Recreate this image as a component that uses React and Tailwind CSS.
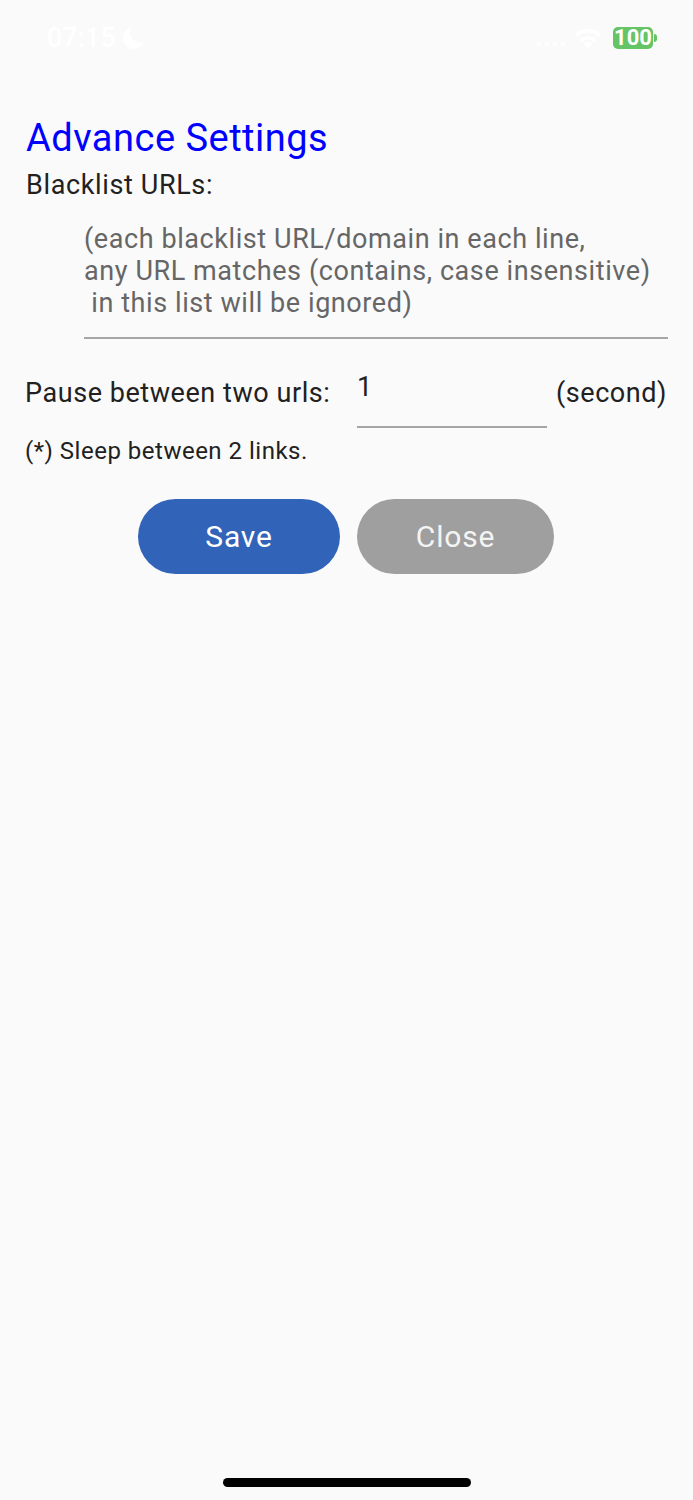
import React from 'react';

const StatusBar = () => (
  <div className="h-[76px] flex items-center justify-between pl-[47px] pr-[36px] text-white">
    <div className="flex items-center gap-[7px]">
      <span className="text-[27px] leading-none font-medium">07:15</span>
      <svg width="21" height="22" viewBox="0 0 21 22" fill="currentColor">
        <path d="M7.500 0 C3 1.500 0 6 0 11 C0 17 4.500 22 10.500 22 C15 22 19 19 21 15 C14.500 17 8.500 13.500 7 8 C6.300 5.500 6.500 2.500 7.500 0 Z" />
      </svg>
    </div>
    <div className="flex items-center">
      <div className="flex items-center gap-[4px] mt-[12px] mr-[9px] opacity-70">
        <div className="w-[4px] h-[4px] rounded-full bg-white" />
        <div className="w-[4px] h-[4px] rounded-full bg-white" />
        <div className="w-[4px] h-[4px] rounded-full bg-white" />
        <div className="w-[4px] h-[4px] rounded-full bg-white" />
      </div>
      <svg width="28" height="20" viewBox="0 0 28 20" fill="none" stroke="currentColor" strokeWidth="3.500">
        <path d="M2 7.500 C8.500 1 19.500 1 26 7.500" />
        <path d="M7 12.500 C11 9 17 9 21 12.500" />
        <path d="M14 20 L9.500 15.500 C12 13.500 16 13.500 18.500 15.500 Z" fill="currentColor" stroke="none" />
      </svg>
      <div className="flex items-center gap-[1px] ml-[11px]">
        <div className="w-[40px] h-[22px] rounded-[5px] bg-[#65c466] flex items-center justify-center text-[22px] leading-none font-bold">
          100
        </div>
        <div className="w-[3px] h-[8px] rounded-r-sm bg-[#65c466]" />
      </div>
    </div>
  </div>
);

const App = () => {
  return (
    <div className="h-[1500px] bg-[#fafafa] flex flex-col font-['Roboto',sans-serif] overflow-hidden">
      <StatusBar />

      <div className="flex-1 pl-[25px] pr-[26px]">
        <h1 className="ml-[1px] mt-[37px] text-[38px] leading-[50px] tracking-[0.5px] text-[#0000ff]">Advance Settings</h1>
        <div className="ml-[1px] mt-[6px] text-[27px] leading-[32px] tracking-[0.63px] text-[#212121]">Blacklist URLs:</div>

        {/* Blacklist input */}
        <div className="ml-[59px] mr-[-1px] mt-[22px] pb-[18px] border-b-2 border-[#a6a6a6] text-[27px] leading-[32px] tracking-[0.58px] text-[#666666] whitespace-pre">
          {'(each blacklist URL/domain in each line,\nany URL matches (contains, case insensitive)\n in this list will be ignored)'}
        </div>

        {/* Pause row */}
        <div className="mt-[18px] flex items-start text-[27px] leading-[32px] tracking-[0.56px] text-[#212121]">
          <span className="mt-[20px] w-[332px]">Pause between two urls:</span>
          <div className="w-[190px] h-[71px] border-b-2 border-[#a6a6a6] pt-[14px]">1</div>
          <span className="mt-[20px] ml-[9px]">(second)</span>
        </div>

        <div className="mt-[8px] text-[24px] leading-[30px] tracking-[0.5px] text-[#212121]">(*) Sleep between 2 links.</div>

        <div className="mt-[33px] flex justify-center gap-[17px] text-[30px] tracking-[0.8px] text-white">
          <button className="w-[202px] h-[75px] rounded-full bg-[#3163b9]">Save</button>
          <button className="w-[197px] h-[75px] rounded-full bg-[#9f9f9f] text-[#f4f4f4]">Close</button>
        </div>
      </div>

      {/* Home indicator */}
      <div className="pb-[13px] flex justify-center">
        <div className="w-[248px] h-[9px] rounded-full bg-black" />
      </div>
    </div>
  );
};

export default App;
